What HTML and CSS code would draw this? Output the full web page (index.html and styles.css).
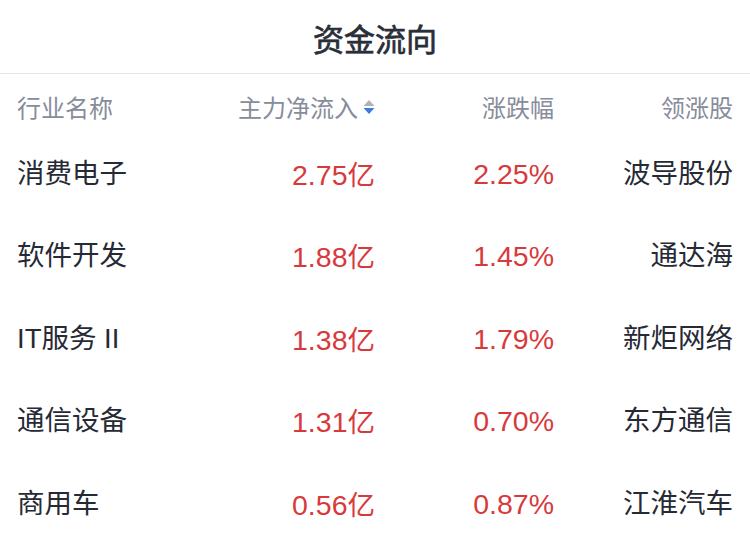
FILE: index.html
```html
<!DOCTYPE html>
<html lang="zh-CN">
<head>
<meta charset="utf-8">
<title>资金流向</title>
<link rel="stylesheet" href="styles.css">
</head>
<body>
<div class="panel">
  <div class="title">资金流向</div>
  <div class="table">
    <div class="row head">
      <div class="cell left">行业名称</div>
      <div class="cell right sortable">主力净流入
        <svg class="sort" width="12" height="16" viewBox="0 0 12 16">
          <path d="M6 1 L11.5 7 L0.5 7 Z" fill="#aeb2bd"/>
          <path d="M0.5 9 L11.5 9 L6 15 Z" fill="#3b7be2"/>
        </svg>
      </div>
      <div class="cell right">涨跌幅</div>
      <div class="cell right">领涨股</div>
    </div>
    <div class="row">
      <div class="cell left name">消费电子</div>
      <div class="cell right up">2.75<span class="cn">亿</span></div>
      <div class="cell right up">2.25%</div>
      <div class="cell right name">波导股份</div>
    </div>
    <div class="row">
      <div class="cell left name">软件开发</div>
      <div class="cell right up">1.88<span class="cn">亿</span></div>
      <div class="cell right up">1.45%</div>
      <div class="cell right name">通达海</div>
    </div>
    <div class="row">
      <div class="cell left name">IT服务 II</div>
      <div class="cell right up">1.38<span class="cn">亿</span></div>
      <div class="cell right up">1.79%</div>
      <div class="cell right name">新炬网络</div>
    </div>
    <div class="row">
      <div class="cell left name">通信设备</div>
      <div class="cell right up">1.31<span class="cn">亿</span></div>
      <div class="cell right up">0.70%</div>
      <div class="cell right name">东方通信</div>
    </div>
    <div class="row">
      <div class="cell left name">商用车</div>
      <div class="cell right up">0.56<span class="cn">亿</span></div>
      <div class="cell right up">0.87%</div>
      <div class="cell right name">江淮汽车</div>
    </div>
  </div>
</div>
</body>
</html>
```
FILE: styles.css
```css
* { box-sizing: border-box; }
html, body {
  margin: 0;
  padding: 0;
  background: #ffffff;
}
body {
  width: 750px;
  height: 548px;
  overflow: hidden;
  font-family: "Liberation Sans", "Noto Sans CJK SC", sans-serif;
}
.panel {
  display: flex;
  flex-direction: column;
}
.title {
  height: 74px;
  display: flex;
  align-items: center;
  justify-content: center;
  padding-top: 1px;
  font-family: "Noto Sans CJK SC", sans-serif;
  font-size: 31px;
  font-weight: 400;
  -webkit-text-stroke: 0.7px #2a2e39;
  color: #2a2e39;
  border-bottom: 1px solid #e6e6e8;
}
.table {
  display: flex;
  flex-direction: column;
  padding: 0 17px;
}
.row {
  display: grid;
  grid-template-columns: repeat(4, 1fr);
  align-items: center;
  height: 82.5px;
  padding-top: 3px;
}
.row.head {
  height: 57px;
  padding-top: 9px;
  font-size: 24px;
  color: #878c9b;
  font-family: "Noto Sans CJK SC", sans-serif;
}
.cell {
  white-space: nowrap;
  line-height: 36px;
}
.left { text-align: left; }
.right { text-align: right; }
.name {
  color: #262a35;
  font-size: 27.5px;
  font-family: "Liberation Sans", "Noto Sans CJK SC", sans-serif;
}
.up {
  color: #d83a3c;
  font-size: 28.5px;
}
.cn {
  font-family: "Noto Sans CJK SC", sans-serif;
  font-size: 27.5px;
}
.sortable {
  display: flex;
  align-items: center;
  justify-content: flex-end;
  gap: 5px;
}
.sort { display: block; }
```
